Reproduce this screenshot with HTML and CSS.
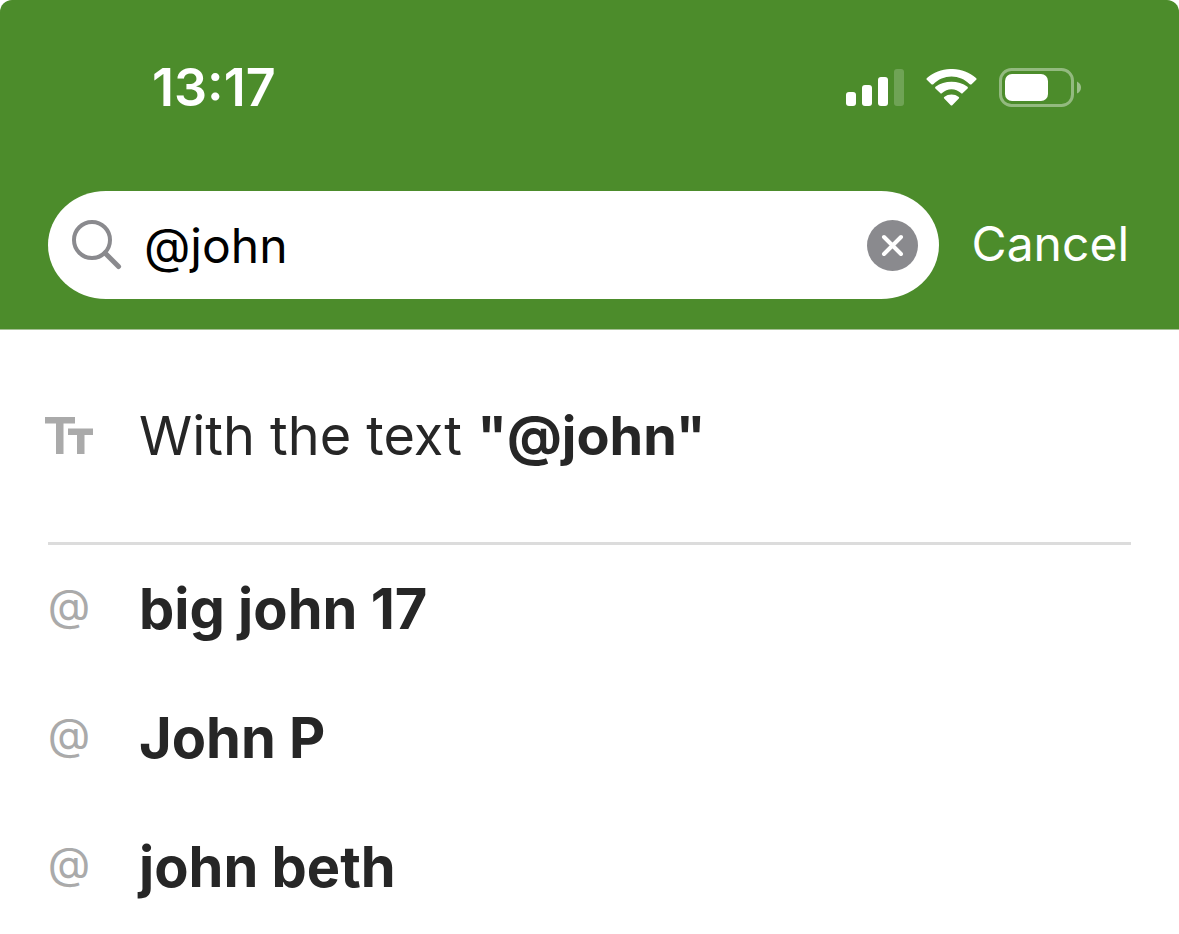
FILE: index.html
```html
<!DOCTYPE html>
<html lang="en">
<head>
    <meta charset="UTF-8">
    <meta name="viewport" content="width=device-width, initial-scale=1.0">
    <title>Search</title>
    <link rel="stylesheet" href="styles.css">
</head>
<body>
    <header class="header">
        <div class="status">
            <time class="clock">13:17</time>
            <div class="status-icons">
                <svg width="58" height="37" viewBox="0 0 58 37" fill="#fff">
                    <rect x="0" y="23" width="10" height="14" rx="3"/>
                    <rect x="16" y="16" width="10" height="21" rx="3"/>
                    <rect x="32" y="8" width="10" height="29" rx="3"/>
                    <rect x="48" y="0" width="10" height="37" rx="3" opacity=".2"/>
                </svg>
                <svg width="51" height="37" viewBox="0 0 51 37" fill="#fff">
                    <path d="M25.500 7.500C32.300 7.500 38.800 10.300 43.700 15.200Q44.700 16 45.600 15.200L50.200 10.700Q51 9.800 50 8.900C36.300-3 14.700-3 1 8.900Q0 9.800 .8 10.700L5.400 15.200Q6.300 16 7.300 15.200C12.200 10.300 18.700 7.500 25.500 7.500Z"/>
                    <path d="M25.500 20.300C29 20.300 32.300 21.700 34.900 24Q35.900 25 36.800 24L41.600 19.500Q42.400 18.700 41.500 17.800C32.500 11 18.500 11 9.500 17.800Q8.600 18.700 9.400 19.500L14.200 24Q15.100 25 16.100 24C18.700 21.700 22 20.300 25.500 20.300Z"/>
                    <path d="M32.800 27.900Q33.600 28.700 32.800 29.500L26.500 36Q25.500 37 24.500 36L18.200 29.500Q17.400 28.700 18.200 27.900C22.400 24.600 28.600 24.600 32.800 27.900Z"/>
                </svg>
                <svg width="82" height="39" viewBox="0 0 82 39">
                    <rect x="1.500" y="1.500" width="72" height="36" rx="11" fill="none" stroke="#fff" stroke-width="3" opacity=".4"/>
                    <rect x="6" y="6" width="43" height="27" rx="7" fill="#fff"/>
                    <path d="M78 13.500Q82 15.500 82 19.500T78 25.500Z" fill="#fff" opacity=".45"/>
                </svg>
            </div>
        </div>
        <form class="search">
            <div class="search-box">
                <svg width="50" height="50" viewBox="0 0 50 50" fill="none" stroke="#8a8a8e" stroke-linecap="round">
                    <circle cx="20" cy="20" r="18" stroke-width="4"/>
                    <path d="M33 33L46.500 46.500" stroke-width="5"/>
                </svg>
                <input class="search-input" type="text" value="@john" aria-label="Search">
                <button class="clear" type="button" aria-label="Clear">
                    <svg width="51" height="51" viewBox="0 0 51 51">
                        <circle cx="25.500" cy="25.500" r="25.500" fill="#8a8a8e"/>
                        <path d="M17 17L34 34M34 17L17 34" stroke="#fff" stroke-width="4" stroke-linecap="round"/>
                    </svg>
                </button>
            </div>
            <button class="cancel" type="button">Cancel</button>
        </form>
    </header>
    <main class="results">
        <a class="row text-row" href="#">
            <span class="icon">
                <svg width="48" height="37" viewBox="0 0 48 37" fill="#aaa">
                    <path d="M0 0H30V6.500H18.500V37H11V6.500H0Z"/>
                    <path d="M23 11.500H48V18H39.500V37H32V18H23Z"/>
                </svg>
            </span>
            <span>With the text <b>"@john"</b></span>
        </a>
        <ul class="people">
            <li><a class="row" href="#"><span class="icon at">@</span><b>big john 17</b></a></li>
            <li><a class="row" href="#"><span class="icon at">@</span><b>John P</b></a></li>
            <li><a class="row" href="#"><span class="icon at">@</span><b>john beth</b></a></li>
        </ul>
    </main>
</body>
</html>
```
FILE: styles.css
```css
body {
    margin: 0;
    background: #fff;
    color: #262626;
    font-family: Inter, "Liberation Sans", sans-serif;
}

svg {
    flex-shrink: 0;
}

.header {
    background: #4c8c2b;
    border-bottom: 1px solid #a5c095;
    border-radius: 12px 12px 0 0;
}

.status {
    display: flex;
    justify-content: space-between;
    align-items: center;
    height: 175px;
    padding: 0 98px 0 152px;
    box-sizing: border-box;
    color: #fff;
}

.clock {
    font-size: 52px;
    font-weight: 600;
}

.status-icons {
    display: flex;
    align-items: center;
    gap: 22px;
}

.search {
    display: flex;
    align-items: center;
    gap: 33px;
    padding: 16px 50px 30px 48px;
}

.search-box {
    flex: 1;
    display: flex;
    align-items: center;
    height: 108px;
    min-width: 0;
    padding: 0 21px 0 24px;
    box-sizing: border-box;
    background: #fff;
    border-radius: 58px / 54px;
}

.search-input {
    flex: 1;
    min-width: 0;
    padding: 0 22px;
    border: none;
    outline: none;
    background: none;
    color: #000;
    font-family: inherit;
    font-size: 48px;
}

.clear,
.cancel {
    padding: 0;
    border: none;
    background: none;
    cursor: pointer;
}

.clear {
    display: flex;
}

.cancel {
    padding-bottom: 4px;
    color: #fff;
    font-family: inherit;
    font-size: 48px;
}

.row {
    display: flex;
    align-items: center;
    gap: 49px;
    height: 128px;
    padding-bottom: 1px;
    color: inherit;
    font-size: 56px;
    text-decoration: none;
}

.results {
    padding: 0 48px;
}

.text-row {
    height: 211px;
    border-bottom: 3px solid #dcdcdc;
    font-size: 54px;
}

.icon {
    display: flex;
    flex-shrink: 0;
    justify-content: center;
    width: 42px;
}

.at {
    padding-bottom: 8px;
    color: #aaa;
    font-size: 44px;
}

.people {
    margin: 0;
    padding: 0;
    list-style: none;
}
```
